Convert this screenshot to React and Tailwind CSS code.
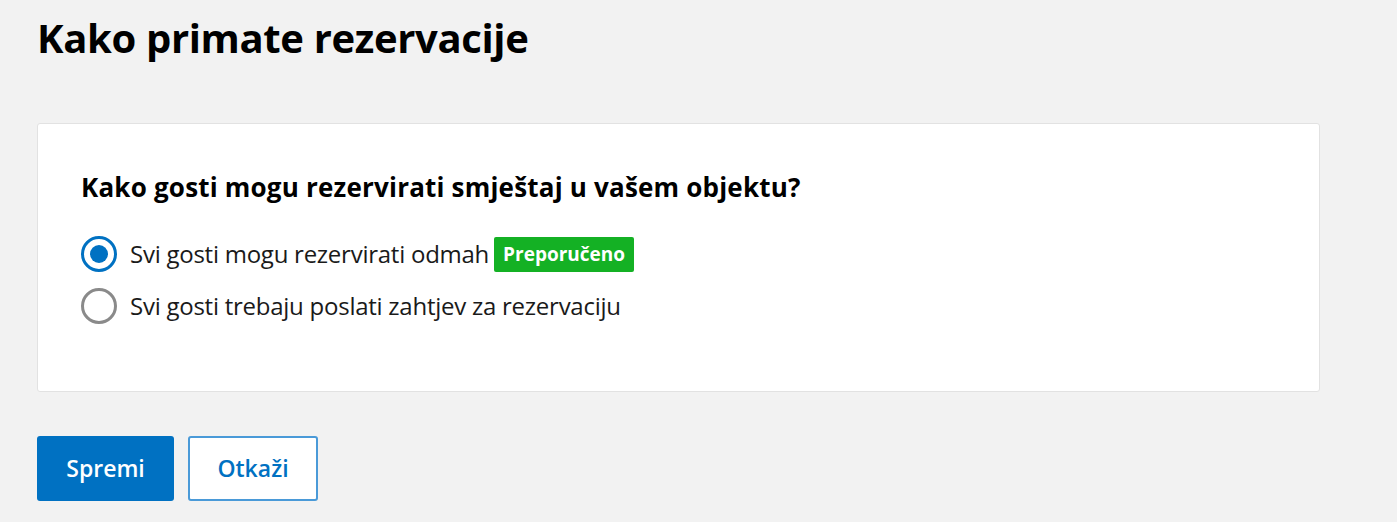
export default function App() {
  const font = { fontFamily: '"Open Sans", "Noto Sans", Arial, sans-serif' };
  return (
    <div className="min-h-[522px] w-full bg-[#f2f2f2] pl-[37px] pt-[12px]" style={font}>
      <h1 className="text-[40px] font-bold leading-[52px] text-black tracking-[-0.35px]">Kako primate rezervacije</h1>
      <div className="mt-[59px] w-[1283px] h-[269px] rounded-[3px] border border-[#e2e2e2] bg-white pl-[43px] pt-[47px]">
        <h2 className="text-[26px] font-bold leading-[32px] text-black tracking-[0.2px]">Kako gosti mogu rezervirati smještaj u vašem objektu?</h2>
        <div className="mt-[33px] flex flex-col gap-[16px]">
          <label className="flex items-center gap-[13px] h-[36px]">
            <span className="flex h-[36px] w-[36px] items-center justify-center rounded-full border-[3px] border-[#0071c2]">
              <span className="h-[18px] w-[18px] rounded-full bg-[#0071c2]" />
            </span>
            <span className="text-[24px] leading-[36px] text-[#1a1a1a] tracking-[-0.25px]">Svi gosti mogu rezervirati odmah</span>
            <span className="-ml-[8px] rounded-[2px] bg-[#14b124] px-[9px] h-[35px] flex items-center text-[19px] font-bold text-white">Preporučeno</span>
          </label>
          <label className="flex items-center gap-[13px] h-[36px]">
            <span className="h-[36px] w-[36px] rounded-full border-[3px] border-[#8a8a8a]" />
            <span className="text-[24px] leading-[36px] text-[#1a1a1a] tracking-[-0.25px]">Svi gosti trebaju poslati zahtjev za rezervaciju</span>
          </label>
        </div>
      </div>
      <div className="mt-[44px] flex gap-[14px]">
        <button className="h-[65px] w-[137px] rounded-[3px] bg-[#0071c2] text-[23px] font-semibold text-white">Spremi</button>
        <button className="h-[65px] w-[130px] rounded-[3px] border-2 border-[#4a9ad8] bg-white text-[23px] font-semibold text-[#0071c2]">Otkaži</button>
      </div>
    </div>
  );
}
